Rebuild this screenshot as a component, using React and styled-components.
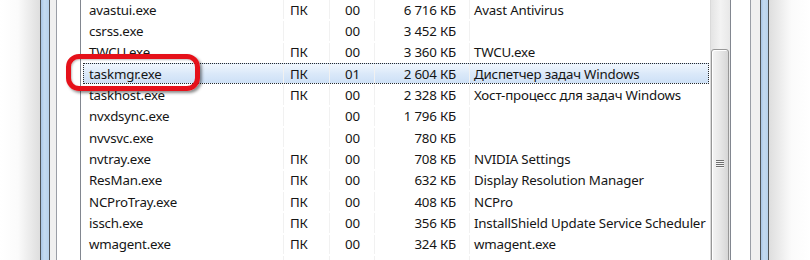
import React from "react";
import styled, { createGlobalStyle } from "styled-components";

const GlobalStyle = createGlobalStyle`
  html, body {
    margin: 0;
    padding: 0;
    background: #ffffff;
    overflow: hidden;
  }
`;

const Page = styled.div`
  position: relative;
  display: flex;
  width: 810px;
  height: 260px;
  overflow: hidden;
  background: #ffffff;
  font-family: "Noto Sans", "Open Sans", sans-serif;
`;

const Shade = styled.div`
  flex: 0 0 ${(p) => p.$w}px;
  background: linear-gradient(
    ${(p) => (p.$side === "left" ? "to right" : "to left")},
    #ffffff 0%,
    #fbfbfb 45%,
    #dedede 100%
  );
`;

const AeroFrame = styled.div`
  flex: 0 0 ${(p) => p.$w}px;
  box-sizing: border-box;
  border-left: 1px solid #4f5357;
  border-right: 1px solid #4f5357;
  background: linear-gradient(to right, #a9c6e6, #c4daf0 40%, #b8d2ec);
`;

const Gutter = styled.div`
  flex: 0 0 ${(p) => p.$w}px;
  background: #f0f0f0;
`;

const TabPage = styled.div`
  flex: 1;
  display: flex;
  box-sizing: border-box;
  border-left: 1px solid #9a9ea6;
  border-right: 1px solid #9a9ea6;
  background: #ffffff;
  padding: 0 19px 0 23px;
`;

const ListView = styled.div`
  flex: 1;
  display: flex;
  box-sizing: border-box;
  border-left: 1px solid #828790;
  border-right: 1px solid #828790;
`;

const Rows = styled.div`
  flex: 1;
  display: flex;
  flex-direction: column;
  margin-top: -1px;
  min-width: 0;
`;

const Row = styled.div`
  flex: 0 0 21.33px;
  box-sizing: border-box;
  display: grid;
  grid-template-columns: 199px 46px 45px 95px 1fr;
  margin: 0 1px 0 2px;
  border: 1px ${(p) => (p.$selected ? "dotted #2a2a2a" : "solid transparent")};
  background: ${(p) =>
    p.$selected
      ? "linear-gradient(to bottom, #f1f7fe 0%, #dbe9f9 50%, #cde0f6 100%)"
      : "transparent"};
  color: #151515;
  font-size: 13.3px;
`;

const Cell = styled.div`
  display: flex;
  align-items: center;
  white-space: nowrap;
  overflow: hidden;
  border-left: ${(p) => (p.$first ? "none" : "1px solid #f1f1f1")};
  padding-left: ${(p) => p.$pl || 0}px;
  padding-right: ${(p) => p.$pr || 0}px;
  justify-content: ${(p) => (p.$right ? "flex-end" : "flex-start")};
  letter-spacing: -0.2px;
`;

const ScrollTrack = styled.div`
  position: relative;
  flex: 0 0 20px;
  box-sizing: border-box;
  border-left: 1px solid #dadada;
  background: linear-gradient(to right, #e4e4e4, #f3f3f3 50%, #e8e8e8);
`;

const Thumb = styled.div`
  position: absolute;
  left: 0;
  right: 1px;
  top: 49px;
  height: 230px;
  box-sizing: border-box;
  border: 1px solid #979797;
  border-radius: 3px;
  background: linear-gradient(to right, #f4f4f4, #e9e9e9 45%, #d6d6d6);
  box-shadow: inset 1px 1px 0 #ffffff;
  display: flex;
  justify-content: center;
  padding-top: 110px;
`;

const Grip = styled.div`
  width: 8px;
  height: 8px;
  background: repeating-linear-gradient(
    to bottom,
    #6f6f6f 0px,
    #6f6f6f 1px,
    #f4f4f4 1px,
    #f4f4f4 2px
  );
`;

const Callout = styled.div`
  position: absolute;
  left: 66px;
  top: 54px;
  width: 134px;
  height: 37px;
  box-sizing: border-box;
  border: 5px solid #e5111a;
  border-radius: 13px;
  box-shadow: 2px 2px 3px rgba(0, 0, 0, 0.45),
    inset 1px 1px 2px rgba(0, 0, 0, 0.25);
  pointer-events: none;
`;

const processes = [
  ["avastui.exe", "ПК", "00", "6 716 КБ", "Avast Antivirus"],
  ["csrss.exe", "", "00", "3 452 КБ", ""],
  ["TWCU.exe", "ПК", "00", "3 360 КБ", "TWCU.exe"],
  ["taskmgr.exe", "ПК", "01", "2 604 КБ", "Диспетчер задач Windows", true],
  ["taskhost.exe", "ПК", "00", "2 328 КБ", "Хост-процесс для задач Windows"],
  ["nvxdsync.exe", "", "00", "1 796 КБ", ""],
  ["nvvsvc.exe", "", "00", "780 КБ", ""],
  ["nvtray.exe", "ПК", "00", "708 КБ", "NVIDIA Settings"],
  ["ResMan.exe", "ПК", "00", "632 КБ", "Display Resolution Manager"],
  ["NCProTray.exe", "ПК", "00", "408 КБ", "NCPro"],
  ["issch.exe", "ПК", "00", "356 КБ", "InstallShield Update Service Scheduler"],
  ["wmagent.exe", "ПК", "00", "324 КБ", "wmagent.exe"],
  ["", "", "", "", ""],
];

export default function App() {
  return (
    <>
      <GlobalStyle />
      <Page>
        <Shade $w={40} $side="left" />
        <AeroFrame $w={10} />
        <Gutter $w={6} />
        <TabPage>
          <ListView>
            <Rows>
              {processes.map(([name, user, cpu, mem, desc, sel], i) => (
                <Row key={i} $selected={sel}>
                  <Cell $first $pl={5}>{name}</Cell>
                  <Cell $pl={6}>{user}</Cell>
                  <Cell $pl={15}>{cpu}</Cell>
                  <Cell $right $pr={13}>{mem}</Cell>
                  <Cell $pl={4}>{desc}</Cell>
                </Row>
              ))}
            </Rows>
            <ScrollTrack>
              <Thumb>
                <Grip />
              </Thumb>
            </ScrollTrack>
          </ListView>
        </TabPage>
        <Gutter $w={9} />
        <AeroFrame $w={9} />
        <Shade $w={41} $side="right" />
        <Callout />
      </Page>
    </>
  );
}
